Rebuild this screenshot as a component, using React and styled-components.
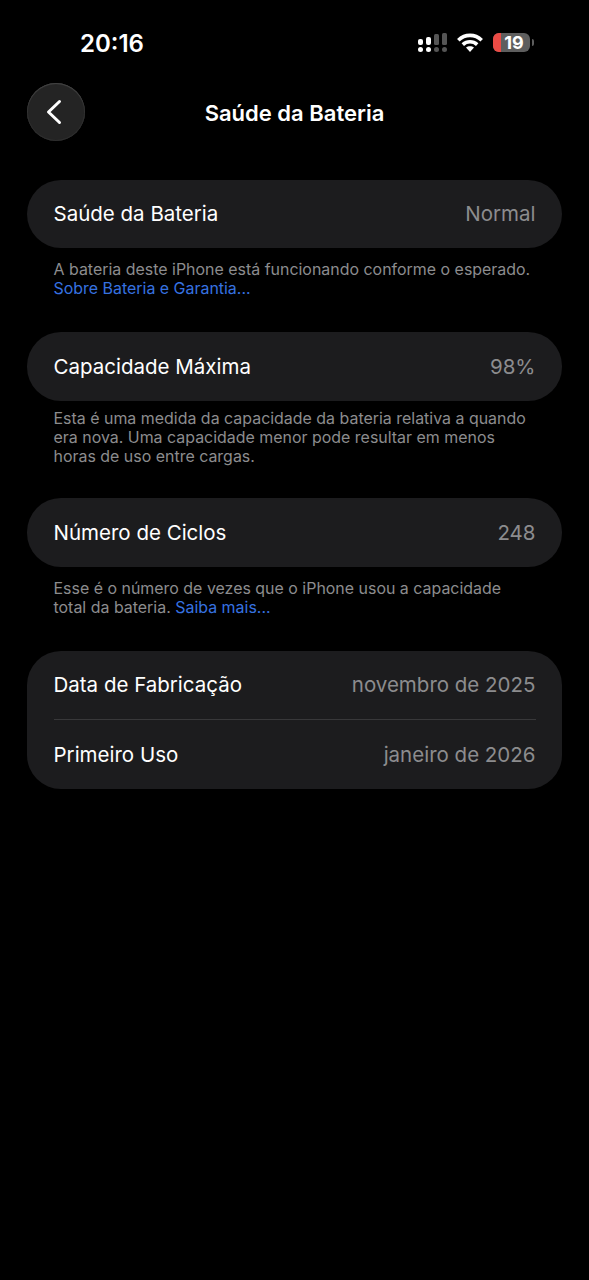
import React from 'react'
import styled, { createGlobalStyle } from 'styled-components'

const GlobalStyle = createGlobalStyle`
  html, body {
    margin: 0;
    padding: 0;
    background: #000;
  }
`

function CellIcon() {
  return (
    <svg width="29" height="19" viewBox="0 0 29 19">
      <rect x="0" y="6" width="5" height="6" rx="2" fill="#fff" />
      <rect x="8" y="4" width="5" height="8" rx="2" fill="#fff" />
      <rect x="16" y="1" width="5" height="11" rx="1.500" fill="#555" />
      <rect x="24" y="0" width="5" height="12" rx="1.500" fill="#555" />
      <circle cx="2.500" cy="16.500" r="2.500" fill="#fff" />
      <circle cx="10.500" cy="16.500" r="2.500" fill="#fff" />
      <circle cx="18.500" cy="16.500" r="2.500" fill="#555" />
      <circle cx="26.500" cy="16.500" r="2.500" fill="#555" />
    </svg>
  )
}

function WifiIcon() {
  return (
    <svg width="26" height="19" viewBox="0 0 26 19" fill="none" stroke="#fff" strokeWidth="3.600">
      <path d="M1.300 7.200C8 .8 18 .8 24.700 7.200" />
      <path d="M5.800 11.600c4.200-3.800 10.200-3.800 14.400 0" />
      <path d="M13 19l-4-4.400c2.200-1.900 5.800-1.900 8 0z" fill="#fff" stroke="none" />
    </svg>
  )
}

function BackIcon() {
  return (
    <svg width="18" height="26" viewBox="0 0 18 26" fill="none" stroke="#fff" strokeWidth="3" strokeLinecap="round" strokeLinejoin="round">
      <path d="M14.500 2.500L3.500 13l11 10.500" />
    </svg>
  )
}

function App() {
  return (
    <>
      <GlobalStyle />
      <Screen>
        <StatusBar>
          <Clock>20:16</Clock>
          <StatusIcons>
            <CellIcon />
            <WifiIcon />
            <Battery>
              <BatteryFill />
              <BatteryLabel>19</BatteryLabel>
            </Battery>
            <BatteryCap />
          </StatusIcons>
        </StatusBar>

        <NavBar>
          <BackButton><BackIcon /></BackButton>
          <NavTitle>Saúde da Bateria</NavTitle>
        </NavBar>

        <Card>
          <Row $height={68} $lift={2}>
            <Label>Saúde da Bateria</Label>
            <Value>Normal</Value>
          </Row>
        </Card>
        <Note $height={84} $top={12}>
          A bateria deste iPhone está funcionando conforme o esperado.<br />
          <NoteLink>Sobre Bateria e Garantia...</NoteLink>
        </Note>

        <Card>
          <Row $height={69}>
            <Label>Capacidade Máxima</Label>
            <Value>98%</Value>
          </Row>
        </Card>
        <Note $height={97} $top={8}>
          Esta é uma medida da capacidade da bateria relativa a quando<br />
          era nova. Uma capacidade menor pode resultar em menos<br />
          horas de uso entre cargas.
        </Note>

        <Card>
          <Row $height={69}>
            <Label>Número de Ciclos</Label>
            <Value>248</Value>
          </Row>
        </Card>
        <Note $height={84} $top={12}>
          Esse é o número de vezes que o iPhone usou a capacidade<br />
          total da bateria. <NoteLink>Saiba mais...</NoteLink>
        </Note>

        <Card>
          <Row $height={68} $lift={2}>
            <Label>Data de Fabricação</Label>
            <Value>novembro de 2025</Value>
          </Row>
          <Divider />
          <Row $height={69}>
            <Label>Primeiro Uso</Label>
            <Value>janeiro de 2026</Value>
          </Row>
        </Card>
      </Screen>
    </>
  )
}

export default App

const Screen = styled.div`
  width: 589px;
  height: 1280px;
  box-sizing: border-box;
  padding: 0 27px;
  background: #000;
  color: #fff;
  font-family: Inter, 'Liberation Sans', sans-serif;
  overflow: hidden;
`

const StatusBar = styled.div`
  height: 83px;
  display: flex;
  justify-content: space-between;
  align-items: flex-start;
  padding: 0 28px 0 53px;
`

const Clock = styled.div`
  margin-top: 29px;
  font-size: 24px;
  line-height: 29px;
  font-weight: 600;
`

const StatusIcons = styled.div`
  display: flex;
  align-items: center;
  gap: 10px;
  margin-top: 33px;
`

const Battery = styled.div`
  position: relative;
  width: 37px;
  height: 19px;
  border-radius: 6px;
  background: #5e5e5e;
  overflow: hidden;
`

const BatteryFill = styled.div`
  width: 8px;
  height: 100%;
  background: #eb4b45;
`

const BatteryLabel = styled.div`
  position: absolute;
  inset: 0;
  padding-left: 5px;
  text-align: center;
  font-size: 18px;
  line-height: 19px;
  font-weight: 700;
`

const BatteryCap = styled.div`
  width: 2px;
  height: 7px;
  margin-left: -8px;
  border-radius: 0 2px 2px 0;
  background: #5e5e5e;
`

const NavBar = styled.div`
  position: relative;
  height: 97px;
  display: flex;
  align-items: flex-start;
`

const BackButton = styled.div`
  width: 58px;
  height: 58px;
  box-sizing: border-box;
  display: flex;
  align-items: center;
  justify-content: center;
  padding-right: 4px;
  border-radius: 50%;
  background: #242424;
  box-shadow: inset 0 1px 1px #444, inset 0 0 0 1px #2e2e2e;
`

const NavTitle = styled.div`
  position: absolute;
  top: 15.500px;
  left: 0;
  right: 0;
  text-align: center;
  font-size: 22px;
  line-height: 29px;
  font-weight: 600;
`

const Card = styled.div`
  padding: 0 26.500px;
  border-radius: 34px;
  background: #1c1c1e;
`

const Row = styled.div`
  height: ${(props) => props.$height}px;
  box-sizing: border-box;
  padding-bottom: ${(props) => props.$lift || 0}px;
  display: flex;
  align-items: center;
  justify-content: space-between;
  font-size: 20.500px;
`

const Label = styled.div`
  color: #fff;
`

const Value = styled.div`
  color: #8c8c8e;
`

const Divider = styled.div`
  height: 1px;
  background: #38383a;
`

const Note = styled.div`
  height: ${(props) => props.$height}px;
  box-sizing: border-box;
  padding: ${(props) => props.$top}px 26.500px 0;
  font-size: 15.950px;
  line-height: 19px;
  color: #8c8c8e;
`

const NoteLink = styled.span`
  color: #3672e0;
`
